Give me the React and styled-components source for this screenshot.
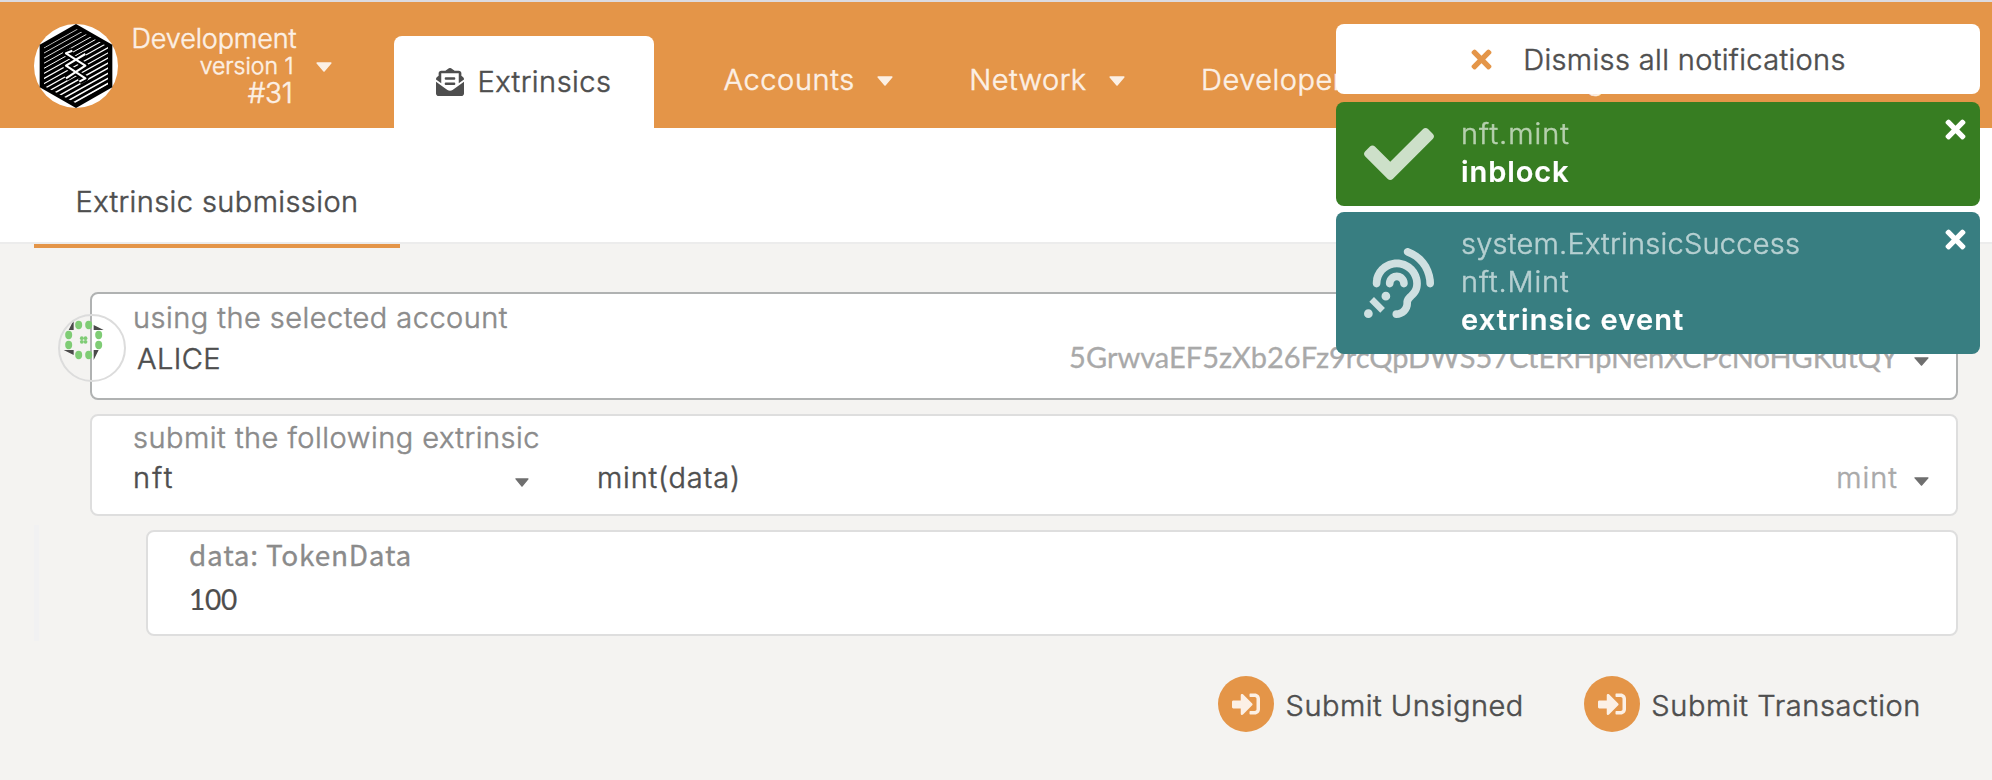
import React from 'react';
import styled, { createGlobalStyle, css } from 'styled-components';
import {
  FaAssistiveListeningSystems,
  FaCheck,
  FaCog,
  FaEnvelopeOpenText,
  FaSignInAlt,
  FaTimes,
} from 'react-icons/fa';

const orange = '#e49548';
const cream = '#fcf0e5';
const ink = '#4e4e4e';

const GlobalStyle = createGlobalStyle`
  * { box-sizing: border-box; }
  body {
    margin: 0;
    background: #f4f3f1;
    color: ${ink};
    font-family: Inter, "Noto Sans CJK JP", sans-serif;
    font-size: 29px;
    font-weight: 300;
    line-height: 34px;
    overflow: hidden;
  }
  svg { display: block; flex: none; }
`;

const Text = styled.span`
  white-space: nowrap;
  letter-spacing: ${(p) => p.$track || 0.5}px;
  -webkit-text-stroke: 0.5px currentColor;
`;

const Page = styled.div`
  min-height: 780px;
  display: flex;
  flex-direction: column;
`;

/* ---------- top bar ---------- */

const TopBar = styled.header`
  display: flex;
  height: 128px;
  padding-left: 34px;
  border-top: 2px solid #dcdbe0;
  background: ${orange};
  color: ${cream};
`;

const Brand = styled.div`
  display: flex;
  align-items: flex-start;
  width: 360px;
  padding-top: 22px;
`;

const BrandInfo = styled.div`
  display: flex;
  flex-direction: column;
  align-items: flex-end;
  width: 180px;
  padding: 1px 1.5px 0 0;
`;

const ChainName = styled(Text)`
  font-size: 27px;
  line-height: 28px;
  letter-spacing: -0.13px;
`;

const ChainVersion = styled(Text)`
  padding-right: 3px;
  font-size: 23px;
  line-height: 27px;
  letter-spacing: 0;
`;

const BlockNumber = styled(Text)`
  padding-right: 4px;
  font-size: 28px;
  line-height: 27px;
  letter-spacing: -0.3px;
`;

const BrandCaret = styled.span`
  padding: 38px 0 0 18px;
`;

const Nav = styled.nav`
  display: flex;
  align-items: flex-start;
  gap: 76.5px;
  padding-top: 34px;
`;

const ActiveTab = styled.a`
  display: flex;
  align-items: center;
  gap: 13.5px;
  width: 260px;
  height: 92px;
  margin-right: -7px;
  padding-left: 42px;
  border-radius: 8px 8px 0 0;
  background: #fff;
  color: ${ink};
`;

const NavLink = styled.a`
  display: flex;
  align-items: center;
  gap: 22px;
  padding-top: 26.5px;

  > svg:last-child { margin-top: 3px; }
`;

/* ---------- second level tabs ---------- */

const SubNav = styled.div`
  height: 116px;
  padding-left: 34px;
  border-bottom: 2px solid #ececec;
  background: #fff;
`;

const SubTab = styled.a`
  display: block;
  width: 366px;
  height: 120px;
  padding: 57px 0 0 41.5px;
  border-bottom: 4px solid ${orange};
`;

/* ---------- form ---------- */

const Main = styled.main`
  display: flex;
  flex-direction: column;
  gap: 14px;
  padding: 48px 34px 0 90px;
`;

const Panel = styled.section`
  position: relative;
  height: ${(p) => p.$height}px;
  padding: ${(p) => p.$top}px 27px 0 41px;
  border: 2px solid ${(p) => (p.$strong ? '#b0b2b2' : '#dedede')};
  border-radius: 8px;
  background: #fff;
`;

const Nested = styled.div`
  display: flex;
  margin: -5px 0 -5px -56px;
  padding: 5px 0 5px 112px;
  background: linear-gradient(#f1f1f2, #f1f1f2) 0 0 / 5px 100% no-repeat;

  > ${Panel} { flex: 1; }
`;

const Label = styled(Text)`
  display: block;
  color: #8b8b8b;
`;

const TypeLabel = styled(Label)`
  font-family: "Noto Sans CJK JP", sans-serif;
  font-size: 28px;
  font-weight: 400;
  letter-spacing: 0.75px;
  -webkit-text-stroke: 0.3px currentColor;
`;

const Fields = styled.div`
  display: flex;
  align-items: center;
  margin-top: ${(p) => p.$gap}px;

  > svg { margin-top: ${(p) => p.$drop}px; }
`;

const Name = styled(Text)`
  flex: 1;
  padding-left: 4px;
`;

const SectionSelect = styled.div`
  display: flex;
  align-items: center;
  justify-content: space-between;
  width: 396px;
  margin-right: 68px;

  > svg { margin-top: 8px; }
`;

const Call = styled(Text)`
  flex: 1;
`;

const Hint = styled(Text)`
  margin-right: 16px;
  color: #a9a9a9;
`;

const Address = styled(Hint)`
  margin-top: -4px;
  font-family: Lato, sans-serif;
  font-weight: 400;
  letter-spacing: 0;
  -webkit-text-stroke: 0.3px currentColor;
  font-variant-ligatures: none;
`;

const Value = styled(Text)`
  display: block;
  margin-top: 11px;
  font-family: Lato, sans-serif;
  font-size: 28px;
  font-weight: 400;
  letter-spacing: -0.2px;
  -webkit-text-stroke: 0.2px currentColor;
`;

const Identicon = styled.svg`
  position: absolute;
  top: 20px;
  left: -34px;
`;

/* ---------- actions ---------- */

const Actions = styled.div`
  display: flex;
  justify-content: flex-end;
  gap: 60px;
  margin-top: 26px;
  padding-right: 37px;
`;

const Button = styled.a`
  display: flex;
  align-items: center;
  gap: 11.5px;

  > ${Text} { padding-top: 3px; }
`;

const ButtonIcon = styled.span`
  display: flex;
  align-items: center;
  justify-content: center;
  width: 56px;
  height: 56px;
  border-radius: 50%;
  background: ${orange};
  color: ${cream};
`;

/* ---------- notifications ---------- */

const Notifications = styled.aside`
  position: fixed;
  top: 24px;
  right: 12px;
  width: 644px;
`;

const DismissAll = styled.div`
  display: flex;
  align-items: center;
  justify-content: center;
  gap: 27px;
  height: 70px;
  margin-bottom: 8px;
  border-radius: 8px;
  background: #fff;

  > svg { color: ${orange}; }
  > ${Text} { padding: 2px 3px 0 0; letter-spacing: 0.35px; }
`;

const tones = {
  success: css`
    background: #377d22;
    color: #b6d0ae;
    > svg { color: #cde0c9; }
  `,
  event: css`
    background: #387e81;
    color: #b6d0d1;
    > svg { color: #cfe0e1; }
  `,
};

const Notice = styled.div`
  position: relative;
  display: flex;
  align-items: center;
  gap: 27px;
  height: ${(p) => p.$height}px;
  margin-bottom: 6px;
  padding: 0 0 1px 28px;
  border-radius: 8px;
  ${(p) => tones[p.$tone]}
`;

const NoticeLines = styled.div`
  display: flex;
  flex-direction: column;
  align-self: flex-start;
  padding-top: 12.5px;
  line-height: 38px;
`;

const Status = styled(Text)`
  color: #fff;
  font-weight: 600;
  -webkit-text-stroke: 0.2px currentColor;
`;

const Close = styled.span`
  position: absolute;
  top: 13px;
  right: 14.5px;
  display: flex;
  justify-content: center;
  width: 20px;
  color: #fff;
`;

function Caret({ width, height, color = 'currentColor' }) {
  return (
    <svg width={width} height={height} viewBox="0 0 16 10" preserveAspectRatio="none">
      <path d="M1.2 1h13.6L8 9z" fill={color} stroke={color} strokeWidth="1.6" strokeLinejoin="round" />
    </svg>
  );
}

const stripes = Array.from({ length: 15 }, (_, i) => 36 + i * 15.3);
const strands = 'M133 98l-19 8 58 37-58 38M172 108l-58 35 58 38-18 10';

function Logo() {
  return (
    <svg width="84" height="84" viewBox="18 18 252 252">
      <defs>
        <clipPath id="face">
          <path d="M144 32l96 54v114l-96 56-96-52V88z" />
        </clipPath>
      </defs>
      <circle cx="144" cy="144" r="126" fill="#fff" />
      <path d="M144 18l109 62v128l-109 62-109-62V80z" fill="#000" />
      <g clipPath="url(#face)" stroke="#fff">
        {stripes.map((y, i) => (
          <path key={y} d={`M44 ${y + 56}L244 ${y - 56}`} strokeWidth={2.2 + i * 0.2} />
        ))}
      </g>
      <g fill="none" strokeLinejoin="round">
        <path d={strands} stroke="#000" strokeWidth="18" />
        <path d={strands} stroke="#fff" strokeWidth="6.5" />
      </g>
    </svg>
  );
}

const dots = [
  [87, 75], [117, 75], [57, 105], [147, 105],
  [57, 135], [147, 135], [87, 165], [117, 165],
];
const seeds = [[96.5, 114.5], [107.5, 114.5], [96.5, 125.5], [107.5, 125.5]];

function AccountIcon() {
  return (
    <Identicon width="68" height="68" viewBox="25 42 204 204">
      <path
        d="M72 60v30H57zM132 75l30 15h-30zM42 150h30v15zM132 150h15l-15 30z"
        fill="#4a4a4a"
      />
      {dots.map(([x, y]) => (
        <ellipse key={`${x}-${y}`} cx={x} cy={y} rx="10.5" ry="12.5" fill="#7fcc75" />
      ))}
      {seeds.map(([x, y]) => (
        <circle key={`${x}-${y}`} cx={x} cy={y} r="5.8" fill="#7fcc75" />
      ))}
      <circle cx="127" cy="144" r="99" fill="none" stroke="#dcdcdc" strokeWidth="6" />
    </Identicon>
  );
}

function Cross() {
  return <FaTimes size={29} />;
}

export default function App() {
  return (
    <Page>
      <GlobalStyle />
      <TopBar>
        <Brand>
          <Logo />
          <BrandInfo>
            <ChainName>Development</ChainName>
            <ChainVersion>version 1</ChainVersion>
            <BlockNumber>#31</BlockNumber>
          </BrandInfo>
          <BrandCaret>
            <Caret width={16} height={10} />
          </BrandCaret>
        </Brand>
        <Nav>
          <ActiveTab>
            <FaEnvelopeOpenText size={28} />
            <Text $track={0.47}>Extrinsics</Text>
          </ActiveTab>
          <NavLink>
            <Text $track={0.6}>Accounts</Text>
            <Caret width={16} height={10} />
          </NavLink>
          <NavLink>
            <Text $track={0.41}>Network</Text>
            <Caret width={16} height={10} />
          </NavLink>
          <NavLink>
            <Text>Developer</Text>
            <Caret width={16} height={10} />
          </NavLink>
          <NavLink>
            <FaCog size={28} />
            <Text>Settings</Text>
          </NavLink>
        </Nav>
      </TopBar>

      <SubNav>
        <SubTab>
          <Text $track={0.4}>Extrinsic submission</Text>
        </SubTab>
      </SubNav>

      <Main>
        <Panel $height={108} $top={7} $strong>
          <AccountIcon />
          <Label $track={0.46}>using the selected account</Label>
          <Fields $gap={7} $drop={4}>
            <Name $track={0.42}>ALICE</Name>
            <Address>5GrwvaEF5zXb26Fz9rcQpDWS57CtERHpNehXCPcNoHGKutQY</Address>
            <Caret width={15} height={9} color="#6f6f6f" />
          </Fields>
        </Panel>

        <Panel $height={102} $top={5}>
          <Label $track={0.5}>submit the following extrinsic</Label>
          <Fields $gap={6} $drop={7}>
            <SectionSelect>
              <Text $track={2.2}>nft</Text>
              <Caret width={14} height={9} color="#6f6f6f" />
            </SectionSelect>
            <Call $track={0.8}>mint(data)</Call>
            <Hint $track={1}>mint</Hint>
            <Caret width={15} height={9} color="#6f6f6f" />
          </Fields>
        </Panel>

        <Nested>
          <Panel $height={106} $top={5}>
            <TypeLabel>data: TokenData</TypeLabel>
            <Value>100</Value>
          </Panel>
        </Nested>

        <Actions>
          <Button>
            <ButtonIcon>
              <FaSignInAlt size={28} />
            </ButtonIcon>
            <Text $track={0.5}>Submit Unsigned</Text>
          </Button>
          <Button>
            <ButtonIcon>
              <FaSignInAlt size={28} />
            </ButtonIcon>
            <Text $track={0.61}>Submit Transaction</Text>
          </Button>
        </Actions>
      </Main>

      <Notifications>
        <DismissAll>
          <Cross />
          <Text>Dismiss all notifications</Text>
        </DismissAll>
        <Notice $tone="success" $height={104}>
          <FaCheck size={70} />
          <NoticeLines>
            <Text $track={1}>nft.mint</Text>
            <Status $track={0.91}>inblock</Status>
          </NoticeLines>
          <Close>
            <Cross />
          </Close>
        </Notice>
        <Notice $tone="event" $height={142}>
          <FaAssistiveListeningSystems size={70} />
          <NoticeLines>
            <Text $track={0.24}>system.ExtrinsicSuccess</Text>
            <Text $track={0.83}>nft.Mint</Text>
            <Status $track={1.1}>extrinsic event</Status>
          </NoticeLines>
          <Close>
            <Cross />
          </Close>
        </Notice>
      </Notifications>
    </Page>
  );
}
